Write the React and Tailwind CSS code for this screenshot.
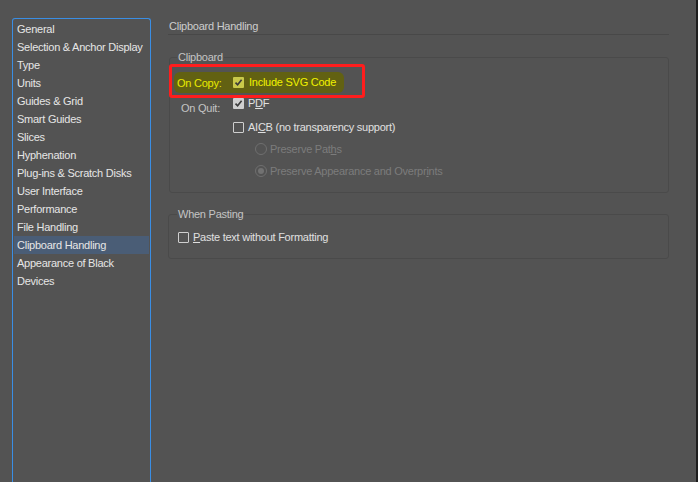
import React from 'react';

const sections = [
  'General',
  'Selection & Anchor Display',
  'Type',
  'Units',
  'Guides & Grid',
  'Smart Guides',
  'Slices',
  'Hyphenation',
  'Plug-ins & Scratch Disks',
  'User Interface',
  'Performance',
  'File Handling',
  'Clipboard Handling',
  'Appearance of Black',
  'Devices',
];

const Check = ({ checked, tint }) => (
  <span
    className={`w-[11px] h-[11px] shrink-0 rounded-[1px] flex items-center justify-center ${
      checked
        ? tint
          ? 'bg-[#c9c94a]'
          : 'bg-[#cfcfcf]'
        : 'border border-[#cfcfcf]'
    }`}
  >
    {checked && (
      <svg width="9" height="9" viewBox="0 0 9 9">
        <path d="M1.5 4.6 L3.6 6.8 L7.6 1.8" fill="none" stroke="#3a3a3a" strokeWidth="1.6" />
      </svg>
    )}
  </span>
);

const Radio = ({ checked }) => (
  <span className="w-[12px] h-[12px] shrink-0 rounded-full border border-[#6f6f6f] flex items-center justify-center">
    {checked && <span className="w-[6px] h-[6px] rounded-full bg-[#727272]" />}
  </span>
);

export default function App() {
  return (
    <div className="w-[698px] h-[482px] bg-[#535353] flex overflow-hidden whitespace-nowrap text-[11px] tracking-[-0.25px] font-['Liberation_Sans',Arial,sans-serif] border-r-2 border-[#1e1e1e]">
      {/* Sidebar */}
      <div className="ml-[12px] mt-[18px] w-[139px] border border-b-0 border-[#3a8ee4] rounded-t-[3px] pt-[1px] px-[1px]">
        {sections.map((s) => (
          <div
            key={s}
            className={`h-[18px] flex items-center pl-[3px] text-[#e6e6e6] ${
              s === 'Clipboard Handling' ? 'bg-[#4a5d76]' : ''
            }`}
          >
            {s}
          </div>
        ))}
      </div>

      {/* Content */}
      <div className="ml-[17px] w-[501px] flex flex-col">
        <div className="mt-[19px] h-[16px] flex items-center pl-[1px] text-[#cdcdcd] border-b border-[#484848]">
          Clipboard Handling
        </div>

        {/* Clipboard group */}
        <div className="relative mt-[22px] ml-[1px] h-[136px] border border-[#4a4a4a] rounded-[3px]">
          <div className="absolute -top-[8px] left-[7px] px-[1px] bg-[#535353] text-[#c4c4c4] leading-[14px]">
            Clipboard
          </div>

          {/* highlight + red annotation */}
          <div className="absolute left-[4px] top-[14px] w-[170px] h-[21px] bg-[#63620f] rounded-[6px] opacity-95" />
          <div className="absolute -left-[1px] top-[6px] w-[196px] h-[34px] border-[3px] border-[#ff1d1d] rounded-[3px]" />

          <div className="relative pt-[17px] pl-[7px]">
            <div className="h-[14px] flex items-center">
              <span className="w-[56px] text-[#e8ea00] pt-[3px]">On Copy:</span>
              <Check checked tint />
              <span className="ml-[5px] text-[#f0f200]">Include SVG Code</span>
            </div>

            <div className="mt-[7px] h-[14px] flex items-center">
              <span className="w-[56px] pl-[4px] pt-[10px] text-[#c4c4c4]">On Quit:</span>
              <Check checked />
              <span className="ml-[4px] text-[#e0e0e0]">
                P<u>D</u>F
              </span>
            </div>

            <div className="mt-[10px] h-[14px] flex items-center pl-[56px]">
              <Check />
              <span className="ml-[4px] text-[#e0e0e0]">
                AI<u>C</u>B (no transparency support)
              </span>
            </div>

            <div className="mt-[8px] h-[14px] flex items-center pl-[78px] text-[#7c7c7c]">
              <Radio />
              <span className="ml-[3px]">
                Preserve Pat<u>h</u>s
              </span>
            </div>

            <div className="mt-[8px] h-[14px] flex items-center pl-[78px] text-[#7c7c7c]">
              <Radio checked />
              <span className="ml-[3px]">
                Preserve Appearance and Overpr<u>i</u>nts
              </span>
            </div>
          </div>
        </div>

        {/* When Pasting group */}
        <div className="relative mt-[21px] h-[45px] border border-[#4a4a4a] rounded-[3px]">
          <div className="absolute -top-[8px] left-[8px] px-[1px] bg-[#535353] text-[#c4c4c4] leading-[14px]">
            When Pasting
          </div>
          <div className="pt-[15px] pl-[9px] h-[14px] flex items-center box-content">
            <Check />
            <span className="ml-[4px] text-[#e0e0e0]">
              <u>P</u>aste text without Formatting
            </span>
          </div>
        </div>
      </div>
    </div>
  );
}
